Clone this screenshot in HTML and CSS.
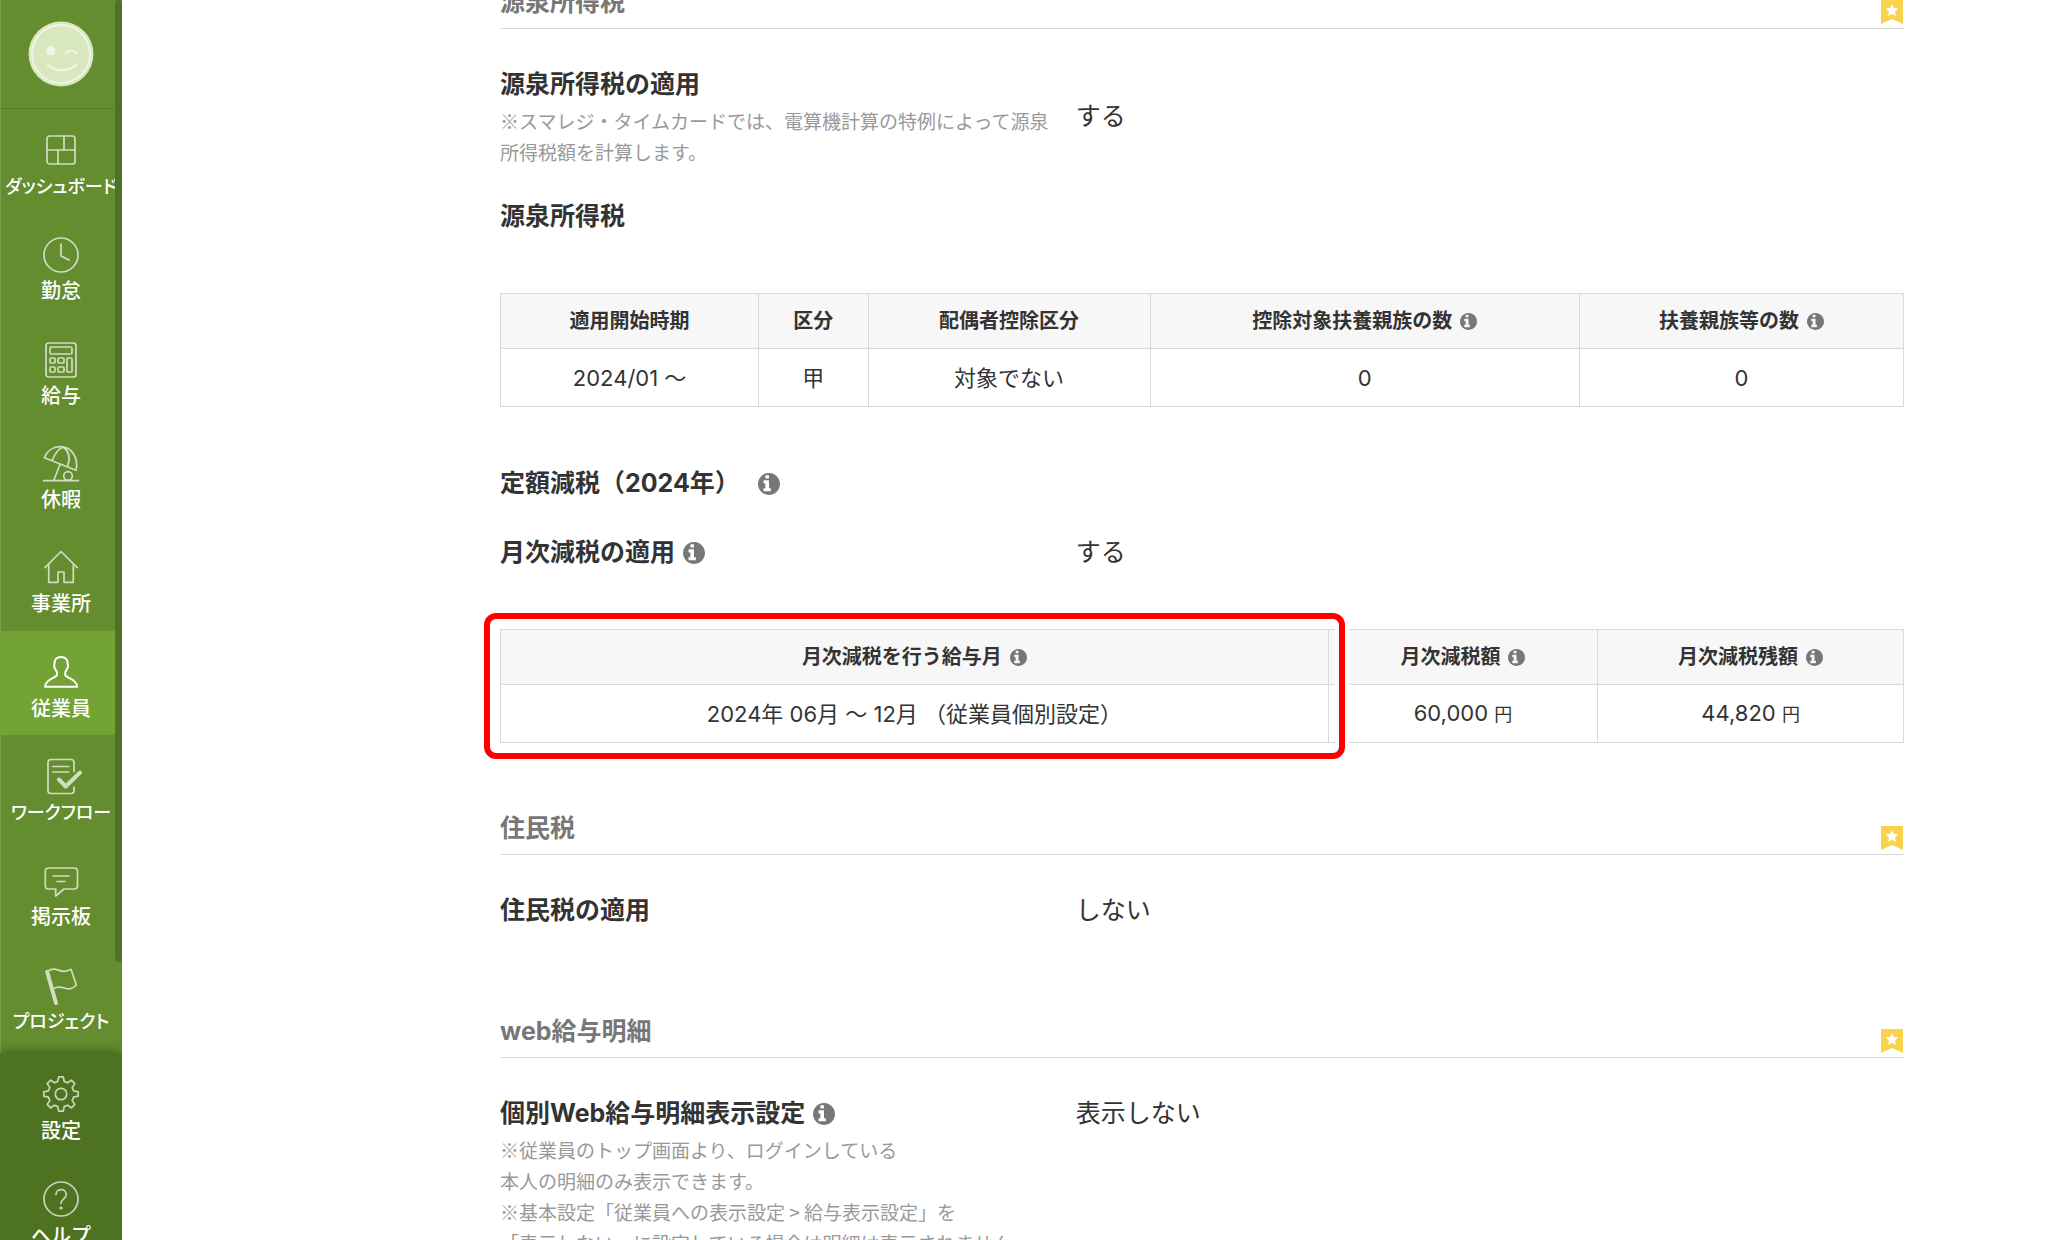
FILE: index.html
```html
<!DOCTYPE html>
<html lang="ja">
  <head>
    <meta charset="UTF-8" />
    <meta name="viewport" content="width=device-width, initial-scale=1.0" />
    <title>従業員 - 給与設定</title>
    <link rel="stylesheet" href="styles.css">
  </head>
  <body>
    <!-- shared icons -->
    <svg class="sprite" aria-hidden="true">
      <symbol id="info" viewBox="128 128 1536 1536">
        <path d="M1024 1376v-160q0-14-9-23t-23-9h-96v-512q0-14-9-23t-23-9h-320q-14 0-23 9t-9 23v160q0 14 9 23t23 9h96v320h-96q-14 0-23 9t-9 23v160q0 14 9 23t23 9h448q14 0 23-9t9-23zm-128-896v-160q0-14-9-23t-23-9h-192q-14 0-23 9t-9 23v160q0 14 9 23t23 9h192q14 0 23-9t9-23zm768 416q0 209-103 385.5t-279.5 279.5-385.5 103-385.5-103-279.5-279.5-103-385.5 103-385.5 279.5-279.5 385.5-103 385.5 103 279.5 279.5 103 385.5z" />
      </symbol>
      <symbol id="bookmark" viewBox="0 0 22 24">
        <path fill="#f9d34c" d="M0 0h22v24l-11-5-11 5z" />
        <path fill="#fff" d="M11 4l1.9 4.1 4.4.5-3.3 3 .9 4.4-3.9-2.2L7.1 16l.9-4.400-3.300-3 4.400-.5z" />
      </symbol>
    </svg>

    <aside class="sidebar">
      <a class="avatar" href="#" aria-label="アカウント">
        <svg viewBox="0 0 66 66">
          <circle cx="33" cy="33" r="32.500" fill="#d9e7bf" />
          <circle cx="33" cy="33" r="29" fill="none" stroke="#eff4e6" stroke-width="2" />
          <circle cx="23" cy="30" r="4.500" fill="#f1f5e9" />
          <path d="M38 32c2-3 8-3 10 0M20 44c7 7 20 7 28 0" fill="none" stroke="#f1f5e9" stroke-width="2.200" stroke-linecap="round" />
        </svg>
      </a>

      <nav class="nav">
        <a class="nav-item" href="#">
          <svg class="nav-icon" viewBox="0 0 36 36"><rect x="4" y="4" width="28" height="28" rx="2.500" /><path d="M4 18h28M21 4v14M15 18v14" /></svg>
          <span class="tight">ダッシュボード</span>
        </a>
        <a class="nav-item" href="#">
          <svg class="nav-icon" viewBox="0 0 36 36"><circle cx="18" cy="19" r="17" /><path d="M18 8v12l8 4" /></svg>
          <span>勤怠</span>
        </a>
        <a class="nav-item" href="#">
          <svg class="nav-icon" viewBox="0 0 36 36"><rect x="3" y="2" width="30" height="34" rx="2.500" /><rect x="7" y="6" width="22" height="7" rx="1.500" /><rect x="7" y="17" width="5" height="5" rx="1" /><rect x="15" y="17" width="6" height="5" rx="1" /><rect x="7" y="26" width="5" height="5" rx="1" /><rect x="15" y="26" width="6" height="5" rx="1" /><rect x="24" y="17" width="5" height="14" rx="1" /></svg>
          <span>給与</span>
        </a>
        <a class="nav-item" href="#">
          <svg class="nav-icon" viewBox="0 0 36 36"><path d="M1.300 12.700C4 6 10 1.700 17 1.700c11 0 19 10 16 23.600zM9.300 15.500C11.500 9 15 4 20.300 2M24.700 21C27.500 13 25.500 6 20.300 2M17 19.300l-6.300 16.400M.7 35.700h34.800" /><circle cx="25" cy="31" r="4.300" /></svg>
          <span>休暇</span>
        </a>
        <a class="nav-item" href="#">
          <svg class="nav-icon" viewBox="0 0 36 36"><path d="M2 18.700L18 2.500l16.300 16.200M5.700 15.500v17.800H15V23h6v10.300h9.300V15.500" /></svg>
          <span>事業所</span>
        </a>
        <a class="nav-item active" href="#">
          <svg class="nav-icon" viewBox="0 0 36 36"><path d="M18 3c-4.600 0-6.800 2.600-6.400 7-.9.800-.5 4 .7 4.700.4 1.600 1 2.600 1.700 3.400v2.700c0 3.200-11.500 3.500-12 11.900h32.200c-.5-8.400-12-8.700-12-11.900v-2.700c.7-.8 1.300-1.800 1.700-3.400 1.200-.7 1.600-3.900.7-4.700.4-4.400-2-7-6.600-7z" /></svg>
          <span>従業員</span>
        </a>
        <a class="nav-item" href="#">
          <svg class="nav-icon" viewBox="0 0 36 36"><path d="M31 13.500V4.500q0-3-3-3H8q-3 0-3 3v28q0 3 3 3h20q3 0 3-3v-3.500M9.700 8.500h16M9.700 14h16" /><path class="thick" d="M16 21.500l6.700 7L37 14.500" /></svg>
          <span class="tight">ワークフロー</span>
        </a>
        <a class="nav-item" href="#">
          <svg class="nav-icon" viewBox="0 0 36 36"><path d="M5.500 6h25.500q3.500 0 3.500 3.500v14q0 3.500-3.500 3.500H21l-8.300 7v-7H5.500Q2.300 27 2.300 23.500v-14Q2.300 6 5.500 6zM10 14h16M14 19.500h8" /></svg>
          <span>掲示板</span>
        </a>
        <a class="nav-item" href="#">
          <svg class="nav-icon" viewBox="0 0 36 36"><path class="thick" d="M4.200 5l8.800 31" /><path d="M5 4c9-6 12 4.500 23-1.700l5.300 15.700c-9 9.500-13-2-22.500 3.500" /></svg>
          <span class="tight">プロジェクト</span>
        </a>
        <div class="scrollbar"></div>
      </nav>

      <div class="nav-footer">
        <a class="nav-item" href="#">
          <svg class="nav-icon" viewBox="0 0 36 36"><path d="M15.800.8h4.400l1 4.600 3.300 1.400 3.900-2.600 3.400 3.400-2.600 3.900 1.400 3.300 4.600 1v4.400l-4.600 1-1.400 3.300 2.600 3.900-3.400 3.400-3.900-2.600-3.300 1.400-1 4.600h-4.400l-1-4.600-3.300-1.400-3.900 2.600-3.400-3.400 2.600-3.900-1.400-3.300-4.600-1v-4.400l4.600-1 1.400-3.300-2.600-3.900 3.400-3.400 3.900 2.600 3.300-1.400z" /><circle cx="18" cy="18" r="5.700" /></svg>
          <span>設定</span>
        </a>
        <a class="nav-item" href="#">
          <svg class="nav-icon" viewBox="0 0 36 36"><circle cx="18" cy="18" r="17" /><path d="M13 13.500c0-6.500 10.300-6.500 10.300 0 0 4.300-5.300 4.300-5.300 9" /><circle class="dot" cx="18" cy="27" r="1.600" /></svg>
          <span>ヘルプ</span>
        </a>
      </div>
    </aside>

    <main class="main">
      <div class="content">
        <section class="section">
          <h2 class="section-title">源泉所得税
            <svg class="bookmark"><use href="#bookmark" /></svg>
          </h2>
          <div class="row">
            <div class="row-label">
              <h3>源泉所得税の適用</h3>
              <p class="note">※スマレジ・タイムカードでは、電算機計算の特例によって源泉所得税額を計算します。</p>
            </div>
            <div class="row-value">する</div>
          </div>
          <div class="row">
            <h3>源泉所得税</h3>
          </div>

          <table class="table">
            <colgroup>
              <col class="col-start"><col class="col-kubun"><col class="col-spouse"><col class="col-support"><col>
            </colgroup>
            <thead>
              <tr>
                <th>適用開始時期</th>
                <th>区分</th>
                <th>配偶者控除区分</th>
                <th>控除対象扶養親族の数<button class="info" aria-label="説明"><svg><use href="#info" /></svg></button></th>
                <th>扶養親族等の数<button class="info" aria-label="説明"><svg><use href="#info" /></svg></button></th>
              </tr>
            </thead>
            <tbody>
              <tr>
                <td>2024/01 ～</td>
                <td>甲</td>
                <td>対象でない</td>
                <td>0</td>
                <td>0</td>
              </tr>
            </tbody>
          </table>

          <div class="row">
            <h3>定額減税（2024年）<button class="info info-wide" aria-label="説明"><svg><use href="#info" /></svg></button></h3>
          </div>
          <div class="row">
            <div class="row-label">
              <h3>月次減税の適用<button class="info" aria-label="説明"><svg><use href="#info" /></svg></button></h3>
            </div>
            <div class="row-value">する</div>
          </div>

          <div class="table-wrap">
            <table class="table">
              <colgroup>
                <col class="col-month"><col class="col-amount"><col>
              </colgroup>
              <thead>
                <tr>
                  <th>月次減税を行う給与月<button class="info" aria-label="説明"><svg><use href="#info" /></svg></button></th>
                  <th>月次減税額<button class="info" aria-label="説明"><svg><use href="#info" /></svg></button></th>
                  <th>月次減税残額<button class="info" aria-label="説明"><svg><use href="#info" /></svg></button></th>
                </tr>
              </thead>
              <tbody>
                <tr>
                  <td>2024年 06月 ～ 12月 （従業員個別設定）</td>
                  <td>60,000 <small>円</small></td>
                  <td>44,820 <small>円</small></td>
                </tr>
              </tbody>
            </table>
            <div class="highlight"></div>
          </div>
        </section>

        <section class="section section-short">
          <h2 class="section-title">住民税
            <svg class="bookmark"><use href="#bookmark" /></svg>
          </h2>
          <div class="row">
            <div class="row-label">
              <h3>住民税の適用</h3>
            </div>
            <div class="row-value">しない</div>
          </div>
        </section>

        <section class="section">
          <h2 class="section-title">web給与明細
            <svg class="bookmark"><use href="#bookmark" /></svg>
          </h2>
          <div class="row row-top">
            <div class="row-label">
              <h3>個別Web給与明細表示設定<button class="info" aria-label="説明"><svg><use href="#info" /></svg></button></h3>
              <p class="note">※従業員のトップ画面より、ログインしている<br>本人の明細のみ表示できます。<br>※基本設定「従業員への表示設定 &gt; 給与表示設定」を<br>「表示しない」に設定している場合は明細は表示されません。</p>
            </div>
            <div class="row-value">表示しない</div>
          </div>
        </section>
      </div>
    </main>
  </body>
</html>
```

FILE: styles.css
```css
/* Reset & Global Styling */
* {
  box-sizing: border-box;
  margin: 0;
  padding: 0;
}

body {
  display: flex;
  height: 100vh;
  overflow: hidden;
  background: #fff;
  color: #333;
  font-family: "Inter", "Noto Sans CJK JP", sans-serif;
  font-size: 25px;
}

.sprite {
  position: absolute;
  width: 0;
  height: 0;
}

/* Sidebar */
.sidebar {
  flex: 0 0 122px;
  min-width: 0;
  display: flex;
  flex-direction: column;
  overflow: hidden;
  background: #638d2e;
  box-shadow: inset 1px 0 0 #78a04a;
}

.avatar {
  flex: 0 0 109px;
  display: flex;
  align-items: center;
  justify-content: center;
  border-bottom: 1px solid #587f27;
}

.avatar svg {
  width: 66px;
  height: 66px;
}

.nav {
  position: relative;
  flex: 1;
  display: flex;
  flex-direction: column;
  padding-bottom: 5px;
}

.nav-item {
  flex: 1;
  display: flex;
  flex-direction: column;
  align-items: center;
  padding-top: 23px;
  color: #fff;
  font-size: 20px;
  font-weight: 500;
  line-height: 24px;
  text-decoration: none;
  white-space: nowrap;
}

.nav-item.active {
  background: #72a334;
}

/* long katakana labels */
.tight {
  font-size: 18px;
  font-feature-settings: "palt";
}

.nav-icon {
  flex: none;
  width: 36px;
  height: 36px;
  margin-bottom: 7px;
  overflow: visible;
  fill: none;
  stroke: #fff;
  stroke-width: 1.7;
  stroke-linecap: round;
  stroke-linejoin: round;
  opacity: 0.7;
}

.active .nav-icon {
  stroke-width: 2;
  opacity: 1;
}

.nav-icon .thick {
  stroke-width: 4;
}

.nav-icon .dot {
  fill: #fff;
  stroke: none;
}

.scrollbar {
  position: absolute;
  top: -109px;
  right: 0;
  bottom: 91px;
  width: 7px;
  border-radius: 4px;
  background: #4e7328;
}

.nav-footer {
  flex: 0 0 187px;
  min-height: 0;
  position: relative;
  background: #4d7321;
  box-shadow: 0 -2px 10px rgba(0, 0, 0, 0.3);
}

.nav-footer .nav-item {
  height: 105px;
}

/* Main */
.main {
  flex: 1;
  overflow: hidden;
  padding: 0 144px 0 378px;
}

.content {
  margin-top: -22px;
}

.section {
  margin-bottom: 61px;
}

.section-short {
  margin-bottom: 77px;
}

.section-title {
  display: flex;
  justify-content: space-between;
  align-items: flex-end;
  margin-bottom: 35px;
  padding-bottom: 2px;
  border-bottom: 1px solid #d9d9d9;
  color: #777;
  font-size: 25px;
  line-height: 48px;
}

.bookmark {
  width: 22px;
  height: 24px;
  margin: 0 1px 2px 0;
}

.row {
  display: flex;
  align-items: center;
}

.row + .row {
  margin-top: 29px;
}

.row-top {
  align-items: flex-start;
}

.row-label {
  flex: 0 0 41%;
  padding-right: 20px;
}

.row-value {
  flex: 1;
  line-height: 40px;
}

h3 {
  font-size: 25px;
  line-height: 40px;
}

.note {
  margin-top: 1px;
  color: #999;
  font-family: "Noto Sans CJK JP", sans-serif;
  font-size: 19px;
  line-height: 31px;
}

.info {
  width: 22px;
  height: 22px;
  margin-left: 8px;
  border: none;
  background: none;
  vertical-align: -3px;
  cursor: pointer;
}

.info-wide {
  margin-left: 18px;
}

.info svg {
  display: block;
  width: 100%;
  height: 100%;
  fill: #777;
}

/* Tables */
.table {
  width: 100%;
  border-collapse: collapse;
  table-layout: fixed;
  text-align: center;
}

.row + .table,
.row + .table-wrap {
  margin-top: 57px;
}

.table + .row {
  margin-top: 56px;
}

.table th,
.table td {
  border: 1px solid #d9d9d9;
}

.table th {
  height: 55px;
  background: #f7f7f7;
  font-size: 20px;
  line-height: 24px;
}

.table td {
  height: 58px;
  font-size: 22px;
  line-height: 28px;
}

.table small {
  font-size: 18px;
}

.table .info {
  width: 17px;
  height: 17px;
  vertical-align: -2px;
}

.col-start {
  width: 18.4%;
}

.col-kubun {
  width: 7.8%;
}

.col-spouse {
  width: 20.1%;
}

.col-support {
  width: 30.6%;
}

.col-month {
  width: 59%;
}

.col-amount {
  width: 19.2%;
}

.table-wrap {
  position: relative;
}

/* Red frame around the month column */
.highlight {
  position: absolute;
  top: -16px;
  bottom: -16px;
  left: -16px;
  width: calc(59% + 33px);
  border: 6px solid #f00;
  border-radius: 12px;
  box-shadow: 0 0 0 4px #fff, inset 0 0 0 4px #fff;
  pointer-events: none;
}
```
